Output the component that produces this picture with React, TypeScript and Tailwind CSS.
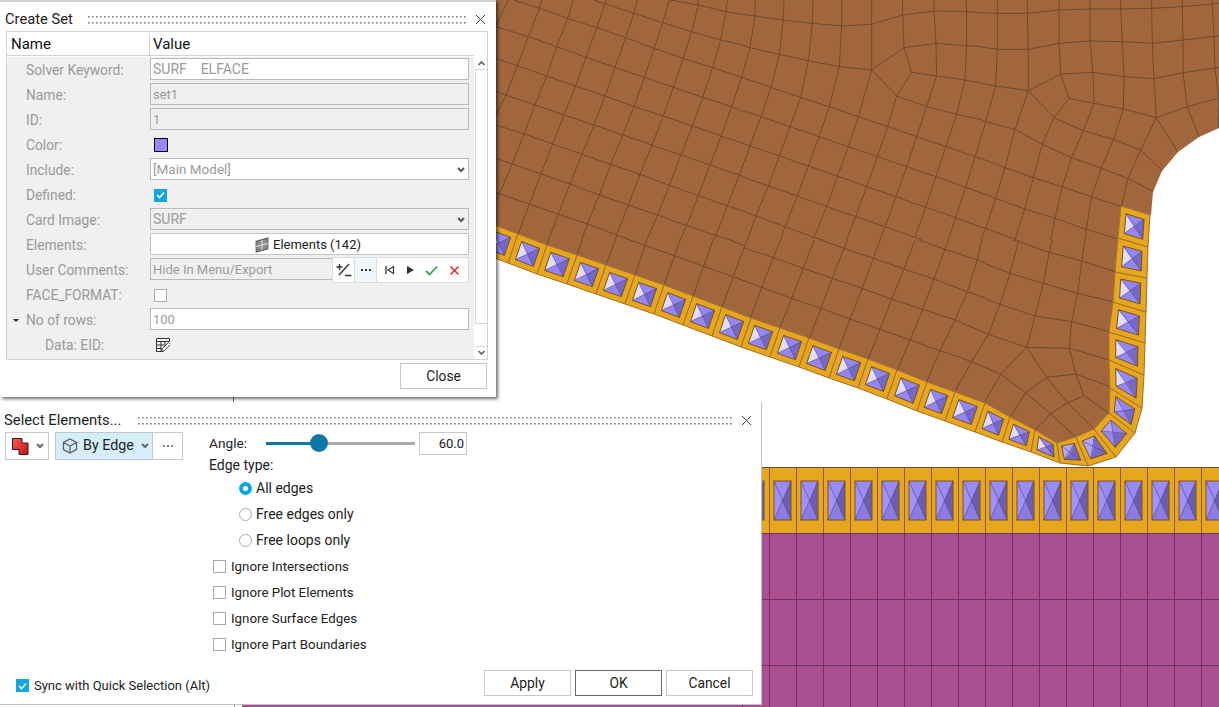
import React from "react";

type Pt = [number, number];

const MESH_9 = [
  "70,0 148,25 233,55 320,83 407,113 493,145 580,175 668,203 755,232 780,242",
  "18,80 115,110 200,140 288,172 375,202 463,232 550,262 638,292 725,320 780,345",
  "18,175 82,197 170,228 257,258 345,288 432,320 520,348 607,378 693,408 780,437",
  "18,275 48,285 135,315 222,345 312,375 398,405 486,435 573,465 660,495 748,525 780,537",
  "18,375 102,402 188,432 276,463 362,493 450,523 538,556 625,587 712,617 780,640",
  "18,475 67,492 153,522 240,552 328,585 415,615 503,645 590,677 678,707 720,720",
  "18,578 118,612 205,643 292,672 380,705 420,720",
  "310,0 345,12 432,40 518,68 605,95 692,120 780,140",
  "540,0 625,15 708,35 780,47",
  "18,75 55,0",
  "18,345 48,285 82,197 115,110 148,25 155,0",
  "18,605 67,492 102,402 135,315 170,228 200,140 233,55 250,0",
  "80,715 118,612 153,522 188,432 222,345 257,258 288,172 320,83 345,12 348,0",
  "175,720 205,643 240,552 276,463 312,375 345,288 375,202 407,113 432,40 442,0",
  "275,720 292,672 328,585 362,493 398,405 432,320 463,232 493,145 518,68 538,0",
  "380,705 415,615 450,523 486,435 520,348 550,262 580,175 605,95 625,15 625,0",
  "470,720 503,645 538,556 573,465 607,378 638,292 668,203 692,120 708,35 712,0",
  "570,720 590,677 625,587 660,495 693,408 725,320 755,232 780,140",
  "670,720 678,707 712,617 748,525 780,437",
];

const MESH_10 = [
  "0,42 45,48 130,60 217,70 305,78 395,73 488,45 582,33 680,35 720,38",
  "0,135 30,143 118,163 205,182 298,200 395,210 492,143 588,130 680,137 720,140",
  "492,143 515,217 470,288 395,210",
  "515,217 590,228 675,240 720,248",
  "0,230 5,232 93,262 182,292 268,320 355,350 443,380 530,410 618,440 705,470 720,475",
  "470,288 560,320 650,343 720,358",
  "0,328 63,350 150,380 237,410 325,440 412,470 500,500 588,530 677,562 720,578",
  "0,428 30,438 118,468 205,498 293,528 380,560 468,590 557,622 647,653 720,680",
  "0,528 85,558 172,588 260,620 347,650 435,680 525,712 545,720",
  "0,630 48,648 135,680 222,712 250,720",
  "45,0 45,48 30,143 5,232 0,245",
  "0,525 30,438 63,350 93,262 118,163 130,60 132,0",
  "22,720 48,648 85,558 118,468 150,380 182,292 205,182 217,70 219,0",
  "122,720 135,680 172,588 205,498 237,410 268,320 298,200 305,78 305,0",
  "222,712 260,620 293,528 325,440 355,350 395,210 395,73 395,0",
  "320,720 347,650 380,560 412,470 443,380 470,288",
  "488,0 488,45 492,143",
  "420,720 435,680 468,590 500,500 530,410 560,320 590,228 588,130 582,33 582,0",
  "525,712 557,622 588,530 618,440 650,343 675,240 680,137 680,35 678,0",
  "625,720 647,653 677,562 705,470 720,425",
];

const MESH_11 = [
  "0,38 55,40 145,40 240,30 333,27 425,27 518,25 610,20 720,10",
  "0,140 55,148 148,148 240,130 333,123 430,125 520,130 612,120 720,108",
  "0,248 50,258 148,272 245,222 342,217 435,230 525,236 612,218 720,203",
  "245,222 270,295 225,353 148,272",
  "270,295 345,310 433,327 532,353 625,320 720,295",
  "3,358 20,365 108,388 190,433 278,473 367,505 447,535 523,575",
  "225,353 313,392 403,418 485,450 550,512",
  "0,473 78,503 163,533 250,560 337,590 427,620",
  "3,578 50,595 137,627 228,655 322,688 416,717",
  "3,680 20,685 108,718 115,720",
  "55,0 55,40 55,148 50,258 20,365 0,430",
  "145,0 145,40 148,148 148,272 108,388 78,503 50,595 20,685 5,720",
  "240,0 240,30 240,130 245,222",
  "333,0 333,27 333,123 342,217 345,310 313,392 278,473 250,560 228,655 215,720",
  "425,0 425,27 430,125 435,230 433,327 403,418 367,505 337,590 322,688 318,720",
  "518,0 518,25 520,130 525,236 532,353 485,450 447,535 427,620",
  "610,0 610,20 612,120 612,218 625,320 660,410",
  "532,353 597,457",
  "700,0 700,15 705,110 708,205 720,295 718,385",
  "225,353 190,433 163,533 137,627 108,718",
];

const MESH_12 = [
  "32,353 65,262 100,172 122,120",
  "120,383 155,295 190,205 222,120",
  "208,415 243,325 277,235 312,145 322,120",
  "297,447 330,357 367,265 400,175 420,120",
  "385,477 420,388 455,298 492,207 525,120",
  "472,510 510,420 548,328 582,237 625,120",
  "560,545 600,452 645,360 682,275 712,180 725,120",
  "645,575 695,485 745,402 780,310",
  "0,238 65,262 155,295 243,325 330,357 420,388 510,420 600,452 695,485 780,525",
  "0,140 100,172 190,205 277,235 367,265 455,298 548,328 645,360 745,402",
  "222,113 312,145 400,175 492,207 582,237 682,275 780,310",
  "525,115 615,148 712,180 780,205",
];

const MESH_5 = [
  "60,0 140,25 230,60 320,88 413,118",
  "20,90 115,125 208,157 305,183 405,215",
  "0,185 90,220 190,250 293,280 398,305",
  "0,290 60,313 165,348 275,365 388,395",
  "0,395 25,403 140,442 268,445 388,480",
  "45,0 20,90 0,165",
  "145,0 140,25 115,125 90,220 60,313 25,403 0,445",
  "238,0 230,60 208,157 190,250 165,348 140,442",
  "333,0 320,88 305,183 293,280 275,365 268,445",
  "140,442 62,523 15,605",
  "0,495 62,523 137,578 212,642 288,712",
  "140,442 200,532 262,608 343,688",
  "268,445 288,522 312,588 388,640",
  "200,532 288,522 390,560",
  "200,532 137,578 92,650",
  "262,608 212,642 165,690",
  "262,608 312,588",
];

const INNER: Pt[] = [
  [489, 223], [518, 234], [547, 245], [577, 255], [606, 265], [635, 275], [664, 285], [693, 296], [722, 307],
  [751, 318], [780, 328], [809, 338], [839, 349], [868, 359], [897, 370], [927, 382], [955, 392], [985, 403],
  [1010, 417], [1035, 430], [1057, 443], [1076, 437], [1094, 429], [1109, 413], [1110, 388], [1109, 360],
  [1109, 332], [1113, 302], [1115, 272], [1118, 238], [1121, 206],
];
const OUTER: Pt[] = [
  ...INNER.slice(0, 18).map(([x, y]): Pt => [x - 10, y + 29]),
  [1002, 442], [1031, 452], [1060, 463], [1088, 466], [1116, 457], [1135, 433], [1142, 408], [1144, 375],
  [1145, 343], [1146, 312], [1147, 278], [1148, 247], [1150, 215],
];

const lerp = (a: Pt, b: Pt, t: number): Pt => [a[0] + (b[0] - a[0]) * t, a[1] + (b[1] - a[1]) * t];
const fmt = (p: Pt[]) => p.map((q) => `${q[0].toFixed(1)},${q[1].toFixed(1)}`).join(" ");

function facetColor(c: Pt, a: Pt, b: Pt) {
  const mx = (a[0] + b[0]) / 2 - c[0];
  const my = (a[1] + b[1]) / 2 - c[1];
  const n = Math.hypot(mx, my) || 1;
  const v = (mx / n) * -0.93 + (my / n) * -0.37;
  if (v > 0.985) return "#e2dbfb";
  if (v > 0.55) return "#b0a6ff";
  if (v > -0.5) return "#9486f4";
  return "#7468c8";
}

function Pyramid({ q }: { q: [Pt, Pt, Pt, Pt] }) {
  const at = (u: number, v: number) => lerp(lerp(q[0], q[1], u), lerp(q[3], q[2], u), v);
  const c = at(0.5, 0.5);
  const p = [at(0.19, 0.19), at(0.81, 0.19), at(0.81, 0.81), at(0.19, 0.81)];
  return (
    <g>
      {p.map((a, i) => {
        const b = p[(i + 1) % 4];
        return <polygon key={i} points={fmt([a, b, c])} fill={facetColor(c, a, b)} />;
      })}
      <polygon points={fmt(p)} fill="none" stroke="#7a5414" strokeWidth="1" />
      <polyline points={fmt([p[0], p[2]])} stroke="#4c4090" strokeWidth="0.6" fill="none" />
      <polyline points={fmt([p[1], p[3]])} stroke="#4c4090" strokeWidth="0.6" fill="none" />
    </g>
  );
}

function MeshGroup({ lines, x, y, clip }: { lines: string[]; x: number; y: number; clip: string }) {
  return (
    <g clipPath={`url(#${clip})`}>
      <g transform={`translate(${x} ${y}) scale(0.33333)`} stroke="#6e4a2e" strokeWidth="3" fill="none">
        {lines.map((l, i) => (
          <polyline key={i} points={l} />
        ))}
      </g>
    </g>
  );
}

function Canvas() {
  const cols: number[] = [];
  for (let x = 742; x < 1219; x += 27) cols.push(x);
  const brown: Pt[] = [
    [480, 0], [1219, 0], [1219, 128], [1199, 137], [1178, 152], [1162, 171], [1153, 192], [1151, 215],
    ...[...INNER].reverse(),
  ];
  const strip: Pt[] = [...INNER, ...[...OUTER].reverse()];
  return (
    <svg className="absolute left-0 top-0" width="1219" height="707" viewBox="0 0 1219 707">
      <defs>
        <clipPath id="brownClip">
          <polygon points={fmt(brown)} />
        </clipPath>
        <clipPath id="c9"><rect x="480" y="0" width="265" height="240" /></clipPath>
        <clipPath id="c10"><rect x="745" y="0" width="235" height="240" /></clipPath>
        <clipPath id="c11"><rect x="980" y="0" width="239" height="240" /></clipPath>
        <clipPath id="c12"><rect x="745" y="240" width="240" height="200" /></clipPath>
        <clipPath id="c5"><rect x="985" y="240" width="234" height="230" /></clipPath>
      </defs>
      <polygon points={fmt(brown)} fill="#a2663d" />
      <g clipPath="url(#brownClip)">
        <MeshGroup lines={MESH_9} x={490} y={0} clip="c9" />
        <MeshGroup lines={MESH_10} x={740} y={0} clip="c10" />
        <MeshGroup lines={MESH_11} x={979} y={0} clip="c11" />
        <MeshGroup lines={MESH_12} x={740} y={200} clip="c12" />
        <MeshGroup lines={MESH_5} x={980} y={200} clip="c5" />
        <g stroke="#6e4a2e" strokeWidth="1" fill="none">
          <polyline points="630,240 745,281" />
          <polyline points="730,240 745,246" />
          <polyline points="548,240 547,245" />
          <polyline points="582,240 577,255" />
          <polyline points="617,235 606,265" />
          <polyline points="647,240 635,275" />
          <polyline points="680,240 664,285" />
          <polyline points="713,240 693,296" />
          <polyline points="747,240 722,307" />
        </g>
      </g>
      <polygon points={fmt(strip)} fill="#e6a61e" />
      {INNER.slice(0, -1).map((p, i) => {
        const q: [Pt, Pt, Pt, Pt] = [p, INNER[i + 1], OUTER[i + 1], OUTER[i]];
        return (
          <g key={i}>
            <polygon points={fmt(q)} fill="#e6a61e" stroke="#a4702c" strokeWidth="1" />
            <Pyramid q={q} />
          </g>
        );
      })}
      <rect x="742" y="467" width="477" height="66" fill="#e6a61e" />
      <rect x="742" y="533" width="477" height="174" fill="#a94f92" />
      <rect x="242" y="700" width="500" height="7" fill="#a94f92" />
      <line x1="742" y1="467.5" x2="1219" y2="467.5" stroke="#6e4a2e" />
      <line x1="742" y1="533.5" x2="1219" y2="533.5" stroke="#74305f" />
      <line x1="742" y1="599.5" x2="1219" y2="599.5" stroke="#74305f" />
      <line x1="742" y1="665.5" x2="1219" y2="665.5" stroke="#74305f" />
      {cols.map((x) => (
        <g key={x}>
          <line x1={x + 0.5} y1="467" x2={x + 0.5} y2="533" stroke="#8a5a3c" />
          <line x1={x + 0.5} y1="533" x2={x + 0.5} y2="707" stroke="#74305f" />
          <polygon points={`${x + 5},481 ${x + 22},481 ${x + 13.5},500.5`} fill="#9a8cf8" />
          <polygon points={`${x + 5},520 ${x + 22},520 ${x + 13.5},500.5`} fill="#8a7ce2" />
          <polygon points={`${x + 5},481 ${x + 5},520 ${x + 13.5},500.5`} fill="#a092ff" />
          <polygon points={`${x + 22},481 ${x + 22},520 ${x + 13.5},500.5`} fill="#6a5eb0" />
          <rect x={x + 5} y="481" width="17" height="39" fill="none" stroke="#7a5414" strokeWidth="1" />
          <line x1={x + 5} y1="481" x2={x + 22} y2="520" stroke="#4c4090" strokeWidth="0.6" />
          <line x1={x + 22} y1="481" x2={x + 5} y2="520" stroke="#4c4090" strokeWidth="0.6" />
        </g>
      ))}
      <line x1="233.5" y1="396" x2="233.5" y2="404" stroke="#666" />
      <line x1="234.5" y1="704" x2="234.5" y2="707" stroke="#888" />
    </svg>
  );
}

function Grip() {
  return (
    <svg className="flex-1 h-[8px] min-w-0" aria-hidden="true">
      <defs>
        <pattern id="gripDots" width="4" height="6" patternUnits="userSpaceOnUse">
          <rect x="0" y="0" width="1.6" height="1.6" fill="#808080" />
        </pattern>
      </defs>
      <rect width="100%" height="8" fill="url(#gripDots)" />
    </svg>
  );
}

function CloseX() {
  return (
    <svg width="11" height="11" viewBox="0 0 11 11" aria-hidden="true">
      <path d="M1 1l9 9M10 1l-9 9" stroke="#444" strokeWidth="1" fill="none" />
    </svg>
  );
}

function Chevron({ color = "#555" }: { color?: string }) {
  return (
    <svg width="8" height="6" viewBox="0 0 8 6" aria-hidden="true">
      <path d="M1 1l3 3 3-3" stroke={color} strokeWidth="2" fill="none" />
    </svg>
  );
}

function CheckBox({ checked = false }: { checked?: boolean }) {
  if (checked) {
    return (
      <span className="flex h-[13px] w-[13px] shrink-0 items-center justify-center bg-[#0ea7e6]">
        <svg width="9" height="8" viewBox="0 0 9 8" aria-hidden="true">
          <path d="M1 4l2.5 2.5L8 1.5" stroke="#fff" strokeWidth="1.6" fill="none" />
        </svg>
      </span>
    );
  }
  return <span className="h-[13px] w-[13px] shrink-0 border border-[#a8a8b0] bg-white" />;
}

function TextField({ value, white = false, size = "text-[13px]" }: { value: string; white?: boolean; size?: string }) {
  return (
    <div className={`flex h-[22px] w-[319px] items-center border border-[#b9b9b9] pl-[2px] pt-[1px] text-[#9a9a9a] ${size} ${white ? "bg-white" : "bg-[#f0f0f0]"}`}>
      <span className="whitespace-pre">{value}</span>
    </div>
  );
}

function SelectField({ value, white = false, size = "text-[13px]" }: { value: string; white?: boolean; size?: string }) {
  return (
    <div className={`flex h-[22px] w-[319px] items-center justify-between border border-[#b9b9b9] pl-[2px] pr-[3px] pt-[1px] text-[#9a9a9a] ${size} ${white ? "bg-white" : "bg-[#f0f0f0]"}`}>
      <span>{value}</span>
      <Chevron />
    </div>
  );
}

function Row({ label, indent = false, marker = false, children }: { label: string; indent?: boolean; marker?: boolean; children: React.ReactNode }) {
  return (
    <div className="flex h-[25px] shrink-0">
      <div className={`relative flex h-[24px] w-[143px] items-center pt-[1px] text-[13.8px] text-[#999] ${indent ? "pl-[38px]" : "pl-[19px]"}`}>
        {marker && <span className="absolute left-[6px] top-[11px] h-0 w-0 border-x-[3px] border-t-[3px] border-x-transparent border-t-[#222]" />}
        {label}
      </div>
      {children}
    </div>
  );
}

function ControlCell({ children }: { children: React.ReactNode }) {
  return <div className="flex h-[24px] items-center pl-[4px]">{children}</div>;
}

function ScrollBar() {
  return (
    <div className="flex w-[13px] flex-col pl-[1px]">
      <div className="mt-[1px] flex h-[12px] items-center justify-center border-b border-[#d8d8d8]">
        <svg width="7" height="5" viewBox="0 0 7 5"><path d="M.5 4L3.5 1l3 3" stroke="#555" strokeWidth="1.5" fill="none" /></svg>
      </div>
      <div className="h-[254px] border-b border-l border-[#d8d8d8]" />
      <div className="h-[22px]" />
      <div className="flex h-[12px] items-center justify-center border-t border-[#d8d8d8]">
        <svg width="7" height="5" viewBox="0 0 7 5"><path d="M.5 1l3 3 3-3" stroke="#555" strokeWidth="1.5" fill="none" /></svg>
      </div>
    </div>
  );
}

function Toolbar() {
  return (
    <div className="absolute left-[332px] top-[255px] flex h-[26px] w-[137px] items-center border border-[#dcdcdc] bg-white">
      <div className="flex h-full w-[22px] items-center justify-center border-r border-[#dcdcdc]">
        <svg width="16" height="14" viewBox="0 0 16 14" aria-hidden="true">
          <path d="M3.5 1v6M.5 4h6M13 1L3 12M9 12.5h6.5" stroke="#333" strokeWidth="1.4" fill="none" />
        </svg>
      </div>
      <div className="flex h-full w-[22px] items-center justify-center border-r border-[#dcdcdc] bg-[#eef7fb]">
        <svg width="10" height="2" viewBox="0 0 10 2" aria-hidden="true"><path d="M0 0h2v2H0zM4 0h2v2H4zM8 0h2v2H8z" fill="#333" /></svg>
      </div>
      <div className="flex flex-1 items-center justify-around px-[3px]">
        <svg width="10" height="10" viewBox="0 0 10 10" aria-hidden="true"><path d="M1 1v8" stroke="#333" strokeWidth="1.3" /><path d="M8.5 1.5v7L3 5z" fill="none" stroke="#333" strokeWidth="1.2" /></svg>
        <svg width="9" height="10" viewBox="0 0 9 10" aria-hidden="true"><path d="M1 1v8l7-4z" fill="#333" /></svg>
        <svg width="13" height="11" viewBox="0 0 13 11" aria-hidden="true"><path d="M1 6l3.5 3.5L12 1.5" stroke="#3aa53f" strokeWidth="1.8" fill="none" /></svg>
        <svg width="11" height="11" viewBox="0 0 11 11" aria-hidden="true"><path d="M1.5 1.5l8 8M9.5 1.5l-8 8" stroke="#e0202e" strokeWidth="1.5" fill="none" /></svg>
      </div>
    </div>
  );
}

function CreateSet() {
  return (
    <div className="absolute left-0 top-0 flex h-[397px] w-[496px] flex-col border-t-2 border-[#cfcfcf] bg-white text-[13px] shadow-[2px_2px_3px_rgba(0,0,0,0.55)]">
      <div className="flex h-[29px] shrink-0 items-center pl-[5px] pr-[10px] pt-[6px]">
        <span className="mr-[15px] text-[14.7px] text-[#222]">Create Set</span>
        <Grip />
        <span className="ml-[9px] flex"><CloseX /></span>
      </div>
      <div className="ml-[6px] flex h-[329px] w-[482px] flex-col border border-[#d2d2d2]">
        <div className="flex h-[23px] shrink-0 pt-[2px] text-[15px] text-[#111]">
          <div className="flex w-[143px] items-center border-r border-[#d2d2d2] pl-[4px]">Name</div>
          <div className="flex items-center pl-[3px]">Value</div>
        </div>
        <div className="h-[2px] w-[467px] border-t border-[#d2d2d2]" />
        <div className="flex flex-1">
          <div className="flex w-[467px] flex-col bg-[#f0f0f0] pt-[1px]">
            <Row label="Solver Keyword:"><TextField value="SURF    ELFACE" white size="text-[14px]" /></Row>
            <Row label="Name:"><TextField value="set1" /></Row>
            <Row label="ID:"><TextField value="1" /></Row>
            <Row label="Color:">
              <ControlCell><span className="h-[14px] w-[14px] border border-black bg-[#9a87ff]" /></ControlCell>
            </Row>
            <Row label="Include:"><SelectField value="[Main Model]" white size="text-[13.5px]" /></Row>
            <Row label="Defined:">
              <ControlCell><CheckBox checked /></ControlCell>
            </Row>
            <Row label="Card Image:"><SelectField value="SURF" size="text-[14px]" /></Row>
            <Row label="Elements:">
              <div className="flex h-[22px] w-[319px] items-center justify-center gap-[4px] border border-[#c4c4c4] bg-white pr-[3px] pt-[1px] text-[#222]">
                <svg width="14" height="16" viewBox="0 0 13 15" aria-hidden="true">
                  <path d="M1 4l11-3v10L1 14z" fill="#8c8c8c" stroke="#555" />
                  <path d="M6.5 2.5v10M1 9l11-3" stroke="#e0e0e0" />
                </svg>
                <span>Elements (142)</span>
              </div>
            </Row>
            <Row label="User Comments:"><TextField value="Hide In Menu/Export" /></Row>
            <Row label="FACE_FORMAT:">
              <ControlCell><CheckBox /></ControlCell>
            </Row>
            <Row label="No of rows:" marker><TextField value="100" white /></Row>
            <Row label="Data: EID:" indent>
              <ControlCell>
                <span className="ml-[2px] flex">
                  <svg width="14" height="14" viewBox="0 0 14 14" aria-hidden="true">
                    <path d="M.5.5h13v3H.5zM.5 3.5v10h7M5 3.5v10M.5 7h9M.5 10.5h5M9 3.5v3" fill="none" stroke="#333" />
                    <path d="M5.5 13.5l1-3 6-6 2 2-6 6z" fill="#fff" stroke="#333" strokeWidth=".9" />
                  </svg>
                </span>
              </ControlCell>
            </Row>
          </div>
          <ScrollBar />
        </div>
      </div>
      <div className="flex justify-end pr-[9px] pt-[3px]">
        <button className="h-[26px] w-[87px] border border-[#c8c8c8] bg-white pt-[1px] text-[13.8px] text-[#222]">Close</button>
      </div>
      <Toolbar />
    </div>
  );
}

function Radio({ on, label }: { on?: boolean; label: string }) {
  return (
    <div className="flex h-[26px] items-center pl-[30px]">
      {on ? (
        <span className="flex h-[13px] w-[13px] items-center justify-center rounded-full bg-[#0ea7e6]">
          <span className="h-[5px] w-[5px] rounded-full bg-white" />
        </span>
      ) : (
        <span className="h-[13px] w-[13px] rounded-full border border-[#a8a8b0] bg-white" />
      )}
      <span className="ml-[4px] pt-[1px] text-[14px]">{label}</span>
    </div>
  );
}

function Check({ label }: { label: string }) {
  return (
    <div className="flex h-[26px] items-center gap-[5px] pl-[4px]">
      <CheckBox />
      <span className="pt-[1px] text-[13.3px]">{label}</span>
    </div>
  );
}

function SelectElements() {
  return (
    <div className="absolute left-0 top-[402px] flex h-[303px] w-[762px] flex-col border-r border-b border-[#c2c2c2] bg-white text-[13px] text-[#222]">
      <div className="flex h-[30px] shrink-0 items-center pl-[4px] pr-[9px] pt-[7px]">
        <span className="mr-[17px] text-[14.8px]">Select Elements...</span>
        <Grip />
        <span className="ml-[7px] flex"><CloseX /></span>
      </div>
      <div className="flex">
        <div className="flex h-[28px] w-[209px] pl-[5px]">
          <div className="flex h-[28px] w-[44px] items-center gap-[7px] border border-[#c8c8c8] pl-[6px]">
            <svg width="17" height="17" viewBox="0 0 17 17" aria-hidden="true">
              <defs>
                <linearGradient id="redFill" x1="0" y1="0" x2="1" y2="1">
                  <stop offset="0" stopColor="#ff5a50" />
                  <stop offset="1" stopColor="#c81010" />
                </linearGradient>
              </defs>
              <path d="M.5.5h9.5v4.5h6v11.5h-9v-5H.5z" fill="url(#redFill)" stroke="#222" />
            </svg>
            <Chevron color="#666" />
          </div>
          <div className="ml-[6px] flex h-[28px] w-[98px] items-center border border-[#c0c8cc] bg-[#d5effa] pl-[6px]">
            <svg width="16" height="16" viewBox="0 0 16 16" aria-hidden="true">
              <path d="M8 1l6.5 3.5v7L8 15l-6.5-3.5v-7zM1.5 4.5L8 8l6.5-3.5M8 8v7" fill="none" stroke="#5a5a78" strokeWidth="1.3" />
            </svg>
            <span className="ml-[5px] text-[14.3px]">By Edge</span>
            <span className="ml-[7px] flex"><Chevron color="#666" /></span>
          </div>
          <div className="flex h-[28px] w-[30px] items-center justify-center border border-l-0 border-[#c8c8c8]">
            <svg width="10" height="2" viewBox="0 0 10 2" aria-hidden="true"><path d="M0 0h2v2H0zM4 0h2v2H4zM8 0h2v2H8z" fill="#888" /></svg>
          </div>
        </div>
        <div className="flex flex-col">
          <div className="flex h-[23px] items-center">
            <span className="w-[57px] text-[13.7px]">Angle:</span>
            <div className="relative flex w-[149px] items-center">
              <span className="h-[3px] w-[53px] bg-[#0b78a8]" />
              <span className="h-[3px] flex-1 bg-[#a8a8a8]" />
              <span className="absolute left-[44px] top-[-8px] h-[18px] w-[18px] rounded-full bg-[#0b78a8]" />
            </div>
            <div className="ml-[4px] flex h-[23px] w-[48px] items-center justify-end border border-[#c8c8c8] pr-[2px]">60.0</div>
          </div>
          <div className="flex h-[20px] items-center text-[14px]">Edge type:</div>
          <Radio on label="All edges" />
          <Radio label="Free edges only" />
          <Radio label="Free loops only" />
          <Check label="Ignore Intersections" />
          <Check label="Ignore Plot Elements" />
          <Check label="Ignore Surface Edges" />
          <Check label="Ignore Part Boundaries" />
        </div>
      </div>
      <div className="mt-[13px] flex items-start justify-between pl-[16px] pr-[8px]">
        <div className="flex items-center gap-[5px] pt-[6px]">
          <CheckBox checked />
          <span>Sync with Quick Selection (Alt)</span>
        </div>
        <div className="flex gap-[4px] text-[13.8px]">
          <button className="h-[26px] w-[87px] border border-[#c8c8c8] bg-white pt-[1px]">Apply</button>
          <button className="h-[26px] w-[87px] border border-[#666] bg-white pt-[1px]">OK</button>
          <button className="h-[26px] w-[87px] border border-[#c8c8c8] bg-white pt-[1px]">Cancel</button>
        </div>
      </div>
    </div>
  );
}

export default function App() {
  return (
    <div className="relative h-[707px] w-[1219px] overflow-hidden bg-white font-['Roboto',sans-serif]">
      <Canvas />
      <CreateSet />
      <SelectElements />
    </div>
  );
}
